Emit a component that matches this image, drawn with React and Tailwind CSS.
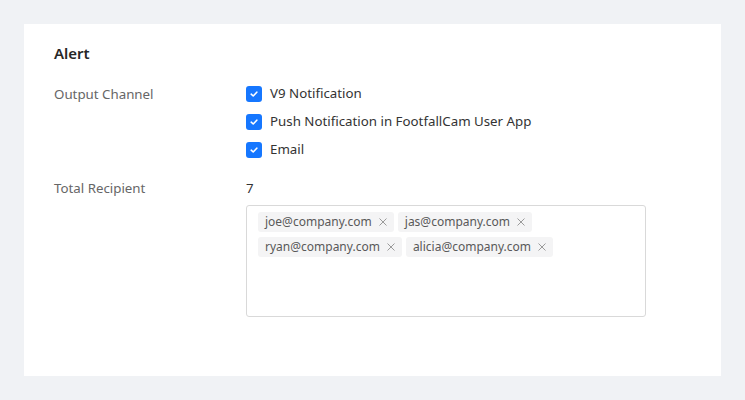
import React from "react";

const channels = [
  "V9 Notification",
  "Push Notification in FootfallCam User App",
  "Email",
];

const recipients = [
  "joe@company.com",
  "jas@company.com",
  "ryan@company.com",
  "alicia@company.com",
];

const CheckIcon = () => (
  <span className="flex items-center justify-center w-4 h-4 rounded-[3px] bg-[#1677ff] shrink-0">
    <svg width="10" height="10" viewBox="0 0 10 10" fill="none">
      <path d="M2.2 5.2 L4.2 7 L7.8 3.2" stroke="white" strokeWidth="1.6" strokeLinecap="round" strokeLinejoin="round" />
    </svg>
  </span>
);

const Tag = ({ label }) => (
  <span className="flex items-center h-5 px-[7px] gap-[7px] rounded-[3px] bg-[#f4f4f5] text-[12px] text-[#595959]">
    {label}
    <svg width="8" height="8" viewBox="0 0 8 8" className="text-[#9a9a9a]">
      <path d="M0.5 0.5 L7.5 7.5 M7.5 0.5 L0.5 7.5" stroke="currentColor" strokeWidth="1" />
    </svg>
  </span>
);

export default function App() {
  return (
    <div
      className="min-h-[400px] bg-[#f0f2f5] p-6"
      style={{ fontFamily: '"Noto Sans", "Open Sans", sans-serif' }}
    >
      <div className="bg-white h-[352px] px-[30px] pt-[18px]">
        <h2 className="text-[15px] font-semibold text-[#262626] leading-[22px]">Alert</h2>

        <div className="flex mt-[20px] text-[13.3px]">
          <div className="w-[192px] text-[#666] leading-5">Output Channel</div>
          <div className="flex flex-col gap-2">
            {channels.map((c) => (
              <label key={c} className="flex items-center gap-2 h-5 text-[#333]">
                <CheckIcon />
                {c}
              </label>
            ))}
          </div>
        </div>

        <div className="flex mt-[18px] text-[13.3px]">
          <div className="w-[192px] text-[#666] leading-5">Total Recipient</div>
          <div className="flex flex-col">
            <div className="text-[#333] leading-5">7</div>
            <div className="mt-[7px] w-[400px] h-[112px] border border-[#d9d9d9] rounded-[3px] px-[11px] py-[6px]">
              <div className="flex flex-wrap gap-x-1 gap-y-[5px]">
                {recipients.map((r) => (
                  <Tag key={r} label={r} />
                ))}
              </div>
            </div>
          </div>
        </div>
      </div>
    </div>
  );
}
